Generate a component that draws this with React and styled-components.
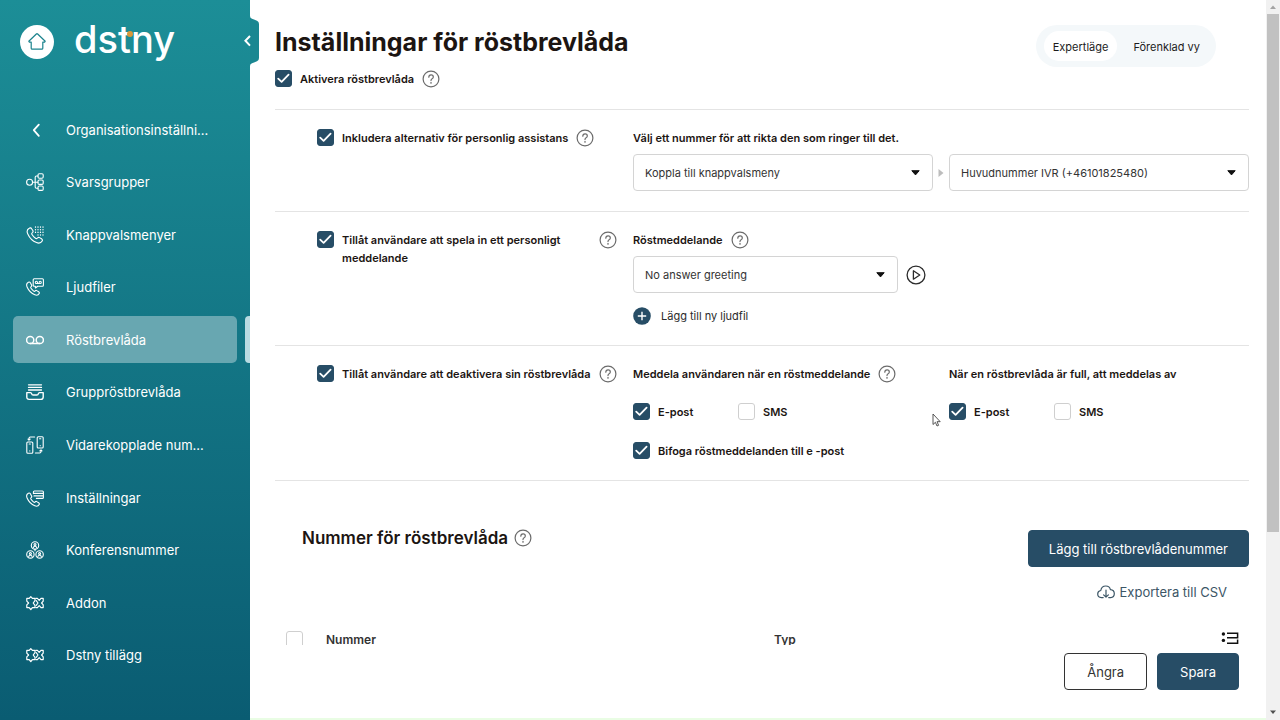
import React, { useState } from "react";
import styled, { createGlobalStyle } from "styled-components";

const GlobalStyle = createGlobalStyle`
  * {
    box-sizing: border-box;
  }
  body {
    margin: 0;
    font-family: Inter, "Liberation Sans", sans-serif;
    color: #1c1512;
    background: #fff;
  }
  button, select, input {
    font-family: inherit;
    margin: 0;
  }
`;

// Page shell
const Shell = styled.div`
  display: flex;
  height: 100vh;
  overflow: hidden;
`;

const Sidebar = styled.aside`
  position: relative;
  display: flex;
  flex-direction: column;
  flex: 0 0 250px;
  padding-bottom: 41px;
  background: linear-gradient(#1c8e97, #0a5c72);
`;

const Brand = styled.div`
  display: flex;
  align-items: center;
  gap: 20px;
  height: 106px;
  padding: 0 20px 22px;
`;

const HomeLink = styled.a`
  display: grid;
  place-items: center;
  width: 34px;
  height: 34px;
  border-radius: 50%;
  background: #fff;
  color: #1b838d;
`;

const Logo = styled.span`
  position: relative;
  margin-bottom: 6px;
  font-size: 38px;
  font-weight: 500;
  line-height: 38px;
  color: #fff;
`;

const LogoDot = styled.i`
  position: absolute;
  top: 11px;
  left: 53px;
  width: 6px;
  height: 6px;
  border-radius: 50%;
  background: #d9983a;
`;

const CollapseButton = styled.button`
  position: absolute;
  top: 16px;
  right: -9px;
  width: 16px;
  height: 50px;
  padding: 0;
  border: 0;
  background: none;
  cursor: pointer;
`;

const Nav = styled.nav`
  display: flex;
  flex: 1;
`;

const NavList = styled.ul`
  display: flex;
  flex: 1;
  flex-direction: column;
  justify-content: space-between;
  margin: 0;
  padding: 0;
  list-style: none;
`;

const NavItem = styled.li`
  display: flex;
  gap: 8px;
  padding-left: 13px;
`;

const NavLink = styled.a`
  display: flex;
  flex: 1;
  align-items: center;
  gap: 22px;
  height: 47px;
  padding-left: 13px;
  border-radius: 5px;
  font-size: 13px;
  line-height: 18px;
  color: #fff;
  text-decoration: none;
  background: ${({ $active }) => ($active ? "#68a7b1" : "transparent")};
  svg {
    flex: none;
  }
`;

const NavMarker = styled.span`
  width: 5px;
  border-radius: 4px 0 0 4px;
  background: ${({ $active }) => ($active ? "#b9dbe2" : "transparent")};
`;

const Main = styled.main`
  display: flex;
  flex: 1;
  flex-direction: column;
  min-width: 0;
  border-bottom: 2px solid #e9fde4;
`;

const Content = styled.div`
  flex: 1;
  min-height: 0;
  padding: 25px 17px 0 25px;
  overflow: hidden;
`;

const PageHeader = styled.header`
  display: flex;
  justify-content: space-between;
  padding-right: 33px;
`;

const PageTitle = styled.h1`
  margin: 0;
  font-size: 25px;
  font-weight: 700;
  line-height: 34px;
`;

const ModeSwitch = styled.div`
  display: flex;
  height: 42px;
  padding: 6px 0 6px 8px;
  border-radius: 21px;
  background: #f4f8fa;
`;

const ModeButton = styled.button`
  height: 30px;
  padding: 1px ${({ $active }) => ($active ? "9px" : "16px")} 0;
  border: 0;
  border-radius: 15px;
  font-size: 11px;
  color: #1c1c1c;
  background: ${({ $active }) => ($active ? "#fff" : "transparent")};
  cursor: pointer;
`;

// Settings form
const FieldHead = styled.div`
  display: flex;
  align-items: flex-start;
  justify-content: ${({ $spread }) => ($spread ? "space-between" : "flex-start")};
  gap: 8px;
  min-height: 18px;
`;

const ActivateRow = styled(FieldHead)`
  padding: 3px 0 21px;
  border-bottom: 1px solid #e4e4e4;
`;

const SettingsRow = styled.section`
  display: grid;
  grid-template-columns: repeat(3, minmax(0, 1fr));
  gap: 16px;
  padding: 19px 0 20px 42px;
  border-bottom: 1px solid #e4e4e4;
`;

const WideCell = styled.div`
  grid-column: span 2;
`;

const CheckLabel = styled.label`
  display: flex;
  align-items: flex-start;
  gap: 8px;
  font-size: 11px;
  font-weight: 600;
  line-height: 18px;
  cursor: pointer;
`;

const CheckBox = styled.span`
  display: inline-grid;
  flex: none;
  width: 17px;
  height: 17px;
  > * {
    grid-area: 1 / 1;
  }
  svg {
    pointer-events: none;
  }
`;

const CheckInput = styled.input`
  width: 17px;
  height: 17px;
  border: 1px solid #cfcfcf;
  border-radius: 3px;
  background: #fff;
  appearance: none;
  cursor: pointer;
  &:checked {
    border-color: #274d66;
    background: #274d66;
  }
`;

const FieldLabel = styled.label`
  font-size: 11px;
  font-weight: 600;
  line-height: 18px;
`;

const FieldTitle = styled.span`
  font-size: 11px;
  font-weight: 600;
  line-height: 18px;
`;

const HelpButton = styled.button`
  display: flex;
  flex: none;
  padding: 0;
  border: 0;
  background: none;
  color: #6b6b6b;
  cursor: pointer;
`;

const SelectRow = styled.div`
  display: flex;
  align-items: center;
  gap: ${({ $gap }) => $gap || "0"};
  margin-top: 7px;
  > svg {
    flex: 0 0 16px;
  }
`;

const SelectBox = styled.div`
  display: grid;
  flex: ${({ $width }) => ($width ? `0 0 ${$width}` : "1")};
  align-items: center;
  > * {
    grid-area: 1 / 1;
  }
  svg {
    justify-self: end;
    margin-right: 13px;
    pointer-events: none;
  }
`;

const SelectInput = styled.select`
  width: 100%;
  height: 37px;
  padding: 0 32px 0 11px;
  border: 1px solid #d4d4d4;
  border-radius: 4px;
  font-size: 11px;
  color: #333;
  background: #fff;
  appearance: none;
`;

const IconButton = styled.button`
  display: flex;
  padding: 0;
  border: 0;
  background: none;
  color: #2b2b2b;
  cursor: pointer;
`;

const AddFileButton = styled(IconButton)`
  align-items: center;
  gap: 10px;
  height: 18px;
  margin-top: 14px;
  font-size: 11px;
`;

const CheckGrid = styled.div`
  display: grid;
  grid-template-columns: 105px 1fr;
  row-gap: 21px;
  margin-top: 20px;
`;

const WideCheck = styled.div`
  grid-column: span 2;
`;

// Voicemail numbers
const NumbersHeader = styled.div`
  display: flex;
  justify-content: space-between;
  margin-top: 49px;
  padding-left: 27px;
`;

const NumbersTitle = styled.h2`
  display: flex;
  align-items: center;
  gap: 6px;
  height: 16px;
  margin: 0;
  font-size: 17px;
  font-weight: 600;
`;

const Actions = styled.div`
  display: flex;
  flex-direction: column;
  align-items: flex-end;
`;

const Button = styled.button`
  height: 37px;
  padding: 0 ${({ $wide }) => ($wide ? "20px" : "22px")};
  border: 1px solid ${({ $outline }) => ($outline ? "#333" : "#274d66")};
  border-radius: 4px;
  font-size: 13px;
  color: ${({ $outline }) => ($outline ? "#333" : "#fff")};
  background: ${({ $outline }) => ($outline ? "#fff" : "#274d66")};
  cursor: pointer;
`;

const ExportLink = styled.a`
  display: flex;
  align-items: center;
  gap: 5px;
  margin: 16px 22px 0 0;
  font-size: 13px;
  line-height: 18px;
  color: #3c5666;
  text-decoration: none;
`;

const Table = styled.table`
  width: 100%;
  margin-top: 26px;
  border-collapse: collapse;
  table-layout: fixed;
  th {
    height: 24px;
    padding: 0;
    font-size: 12px;
    font-weight: 600;
    line-height: 18px;
    text-align: left;
    vertical-align: middle;
    color: #333;
  }
  th:first-child {
    width: 51px;
    padding: 4px 0 0 11px;
  }
  th:nth-child(2) {
    width: 46%;
  }
  th:last-child {
    width: 48px;
    padding: 4px 0 0 20px;
    vertical-align: top;
  }
`;

const Footer = styled.footer`
  display: flex;
  justify-content: flex-end;
  gap: 10px;
  padding: 8px 27px 28px;
`;

const ScrollTrack = styled.div`
  display: flex;
  flex: 0 0 14px;
  flex-direction: column;
  align-items: center;
  background: #f1f1f1;
  svg {
    flex: none;
  }
`;

const ScrollRoom = styled.div`
  flex: 1;
  width: 12px;
`;

const ScrollThumb = styled.div`
  height: 75%;
  background: #c1c1c1;
`;

const Pointer = styled.svg`
  position: absolute;
  top: 413px;
  left: 932px;
  pointer-events: none;
`;

// Icons
const NavSvg = ({ children }) => (
  <svg
    width="18"
    height="18"
    viewBox="0 0 18 18"
    fill="none"
    stroke="currentColor"
    strokeWidth="1.1"
    strokeLinecap="round"
    strokeLinejoin="round"
    aria-hidden="true"
  >
    {children}
  </svg>
);

const HANDSET =
  "M3.2 2.2C1 3.5.6 5.5 1.8 8c1.8 4 4.7 7 8.7 8.6 2.5 1 4.5.4 5.7-1.6.6-1 .1-1.6-.7-2.2l-1.9-1.2c-.8-.5-1.5-.3-2.1.4-.7.8-1.2.9-2 .3C8 11.2 6.9 10 6 8.5c-.5-.8-.4-1.3.4-1.9.7-.6.9-1.3.4-2.1L5.6 2.7c-.6-.9-1.5-1.1-2.4-.5Z";

const SMALL_HANDSET =
  "M2.4 4.2C.4 5.2.2 7 1.2 9.2c1.6 3.6 4.2 6.2 7.6 7.6 2 .8 3.6.2 4.4-1.4.4-.8 0-1.3-.6-1.7l-1.8-1.1c-.6-.4-1.2-.2-1.6.3-.5.6-.9.6-1.5.2-1.2-.9-2.1-1.9-2.8-3.1-.3-.6-.2-1 .3-1.4.6-.5.7-1.1.3-1.7L4.4 4.8c-.5-.8-1.2-1-2-.6Z";

const BackIcon = () => (
  <NavSvg>
    <path d="M12.8 3.6 7.8 9.2l5 5.6" strokeWidth="1.8" />
  </NavSvg>
);

const GroupsIcon = () => (
  <NavSvg>
    <circle cx="3.6" cy="9.2" r="3" />
    <rect x="12" y=".8" width="5.2" height="4.4" rx="1.2" />
    <rect x="12" y="7" width="5.2" height="4.4" rx="1.2" />
    <rect x="12" y="13" width="5.2" height="4.4" rx="1.2" />
    <path d="M6.6 9.2H12M12 3h-1.6q-1.2 0-1.2 1.2v9.8q0 1.2 1.2 1.2H12" />
  </NavSvg>
);

const KeypadIcon = () => (
  <NavSvg>
    <path d={HANDSET} />
    <path
      d="M9.5 1v.2M12 1v.2M14.5 1v.2M17 1v.2M9.5 3.6v.2M12 3.6v.2M14.5 3.6v.2M17 3.6v.2M9.5 6.2v.2M12 6.2v.2M14.5 6.2v.2M17 6.2v.2M12 8.8v.2M14.5 8.8v.2M17 8.8v.2"
      strokeWidth="1.3"
    />
  </NavSvg>
);

const AudioIcon = () => (
  <NavSvg>
    <path d={SMALL_HANDSET} />
    <path d="M8.2.8h8.2q1 0 1 1v5.4q0 1-1 1h-4.6L9.4 10V8.2H8.2q-1 0-1-1V1.8q0-1 1-1Z" />
    <circle cx="10.4" cy="4.4" r="1.1" />
    <circle cx="14.2" cy="4.4" r="1.1" />
    <path d="M10.4 5.5h3.8" />
  </NavSvg>
);

const VoicemailIcon = () => (
  <NavSvg>
    <circle cx="4.2" cy="9" r="3.6" strokeWidth="1.5" />
    <circle cx="13.8" cy="9" r="3.6" strokeWidth="1.5" />
    <path d="M4.2 12.6h9.6" strokeWidth="1.5" />
  </NavSvg>
);

const InboxIcon = () => (
  <NavSvg>
    <path d="M2.5 1.8h13M2.5 4.4h13M2.5 7h13" strokeWidth="1.3" />
    <path
      d="M.8 9.6h3.6q1 0 1.2 1 .3 1.4 1.6 1.4h3.6q1.3 0 1.6-1.4.2-1 1.2-1h3.6v4.4q0 2.4-2.4 2.4H3.2Q.8 16.4.8 14Z"
      strokeWidth="1.4"
    />
  </NavSvg>
);

const ForwardIcon = () => (
  <NavSvg>
    <rect x=".8" y="6" width="6" height="11.2" rx="1" />
    <rect x="11.2" y=".8" width="6" height="11.2" rx="1" />
    <path d="M3 4V2.4Q3 1 4.4 1h4.2M2 3.2l1 1 1.2-1M15 14v1.6q0 1.4-1.4 1.4H9.4M13.8 14.8l1.2-1 1 1M3.2 8h1.2M13.6 2.8h1.2M3.8 14.8v.1M14.2 9.6v.1" />
  </NavSvg>
);

const CallSettingsIcon = () => (
  <NavSvg>
    <path d={SMALL_HANDSET} />
    <path d="M7.4 4.6V3q0-1 1-1h8q1 0 1 1v5.4q0 1-1 1h-6M7.4 4.4h10M8 6.9h9.4" />
  </NavSvg>
);

const ConferenceIcon = () => (
  <NavSvg>
    {[
      [9, 4.4],
      [4.4, 13.4],
      [13.6, 13.4],
    ].map(([x, y]) => (
      <g key={x}>
        <circle cx={x} cy={y} r="3.7" />
        <circle cx={x} cy={y - 0.9} r="1" />
        <path d={`M${x - 1.7} ${y + 2.2}q.2-1.4 1.7-1.4t1.7 1.4`} />
      </g>
    ))}
    <path d="M9 8.2v1.6" />
  </NavSvg>
);

const PuzzleIcon = () => (
  <NavSvg>
    <path
      d="M.8 4.4h2.4l1.6-1.8 1.6 1.8H9v2.2L7.2 9 9 11.4v2.2H6.4l-1.6 2-1.6-2H.8v-2.8L2.6 9 .8 7.2Z"
      strokeWidth="1.2"
    />
    <path
      d="M9.8 4.4h1.6l1.8 2 1.8-2h2.2v2.8L15.6 9l1.6 1.8v2.8H15l-1.8-2-1.8 2H9.8M10.2 6.6 12 9l-1.8 2.4"
      strokeWidth="1.2"
    />
  </NavSvg>
);

const HelpIcon = () => (
  <svg width="18" height="18" viewBox="0 0 18 18" fill="none" stroke="currentColor" aria-hidden="true">
    <circle cx="9" cy="9" r="7.9" strokeWidth="1.2" />
    <path
      d="M6.8 7.2q0-2.3 2.3-2.3 2.2 0 2.2 2 0 1.2-1.2 1.8Q9 9.3 9 10.6"
      strokeWidth="1.2"
      strokeLinecap="round"
    />
    <circle cx="9" cy="12.9" r=".8" fill="currentColor" stroke="none" />
  </svg>
);

const CaretIcon = () => (
  <svg width="9" height="6" viewBox="0 0 9 6" aria-hidden="true">
    <path d="M.8.7h7.4L4.5 4.9Z" fill="#111" stroke="#111" strokeLinejoin="round" />
  </svg>
);

// Reusable parts
const Help = ({ topic }) => (
  <HelpButton type="button" aria-label={`Hjälp: ${topic}`}>
    <HelpIcon />
  </HelpButton>
);

function Tick({ checked = false, ...rest }) {
  const [on, setOn] = useState(checked);
  return (
    <CheckBox>
      <CheckInput type="checkbox" checked={on} onChange={() => setOn(!on)} {...rest} />
      {on && (
        <svg width="17" height="17" viewBox="0 0 17 17" aria-hidden="true">
          <path
            d="m3.2 8.6 3.4 3.2 7-7.2"
            fill="none"
            stroke="#fff"
            strokeWidth="1.8"
            strokeLinecap="round"
            strokeLinejoin="round"
          />
        </svg>
      )}
    </CheckBox>
  );
}

const Check = ({ children, checked }) => (
  <CheckLabel>
    <Tick checked={checked} />
    <span>{children}</span>
  </CheckLabel>
);

const Select = ({ option, width, ...rest }) => (
  <SelectBox $width={width}>
    <SelectInput {...rest}>
      <option>{option}</option>
    </SelectInput>
    <CaretIcon />
  </SelectBox>
);

const navItems = [
  { label: "Organisationsinställni...", icon: <BackIcon /> },
  { label: "Svarsgrupper", icon: <GroupsIcon /> },
  { label: "Knappvalsmenyer", icon: <KeypadIcon /> },
  { label: "Ljudfiler", icon: <AudioIcon /> },
  { label: "Röstbrevlåda", icon: <VoicemailIcon />, active: true },
  { label: "Gruppröstbrevlåda", icon: <InboxIcon /> },
  { label: "Vidarekopplade num...", icon: <ForwardIcon /> },
  { label: "Inställningar", icon: <CallSettingsIcon /> },
  { label: "Konferensnummer", icon: <ConferenceIcon /> },
  { label: "Addon", icon: <PuzzleIcon /> },
  { label: "Dstny tillägg", icon: <PuzzleIcon /> },
];

const SideMenu = () => (
  <Sidebar>
    <Brand>
      <HomeLink href="#home" aria-label="Hem">
        <svg width="20" height="20" viewBox="0 0 20 20" fill="none" aria-hidden="true">
          <path
            d="M9.6 1.8q.4-.4.8 0l7.8 7.4-.6 1h-1.8v6q0 1-1 1H5.2q-1 0-1-1v-6H2.4l-.6-1Z"
            stroke="currentColor"
            strokeWidth="1.2"
            strokeLinejoin="round"
          />
        </svg>
      </HomeLink>
      <Logo>
        dstny
        <LogoDot />
      </Logo>
    </Brand>
    <CollapseButton type="button" aria-label="Dölj menyn">
      <svg width="16" height="50" viewBox="0 0 16 50" fill="none" aria-hidden="true">
        <path d="M7 0q0 2 2 2.7l5 2Q16 5.5 16 8v34q0 2.5-2 3.3l-5 2Q7 48 7 50Z" fill="#1a8791" />
        <path d="m7 20-4.6 4.8L7 29.6" stroke="#fff" strokeWidth="2" />
      </svg>
    </CollapseButton>
    <Nav aria-label="Meny">
      <NavList>
        {navItems.map(({ label, icon, active }) => (
          <NavItem key={label}>
            <NavLink href="#" $active={active} aria-current={active ? "page" : undefined}>
              {icon}
              {label}
            </NavLink>
            <NavMarker $active={active} />
          </NavItem>
        ))}
      </NavList>
    </Nav>
  </Sidebar>
);

export default function App() {
  const [mode, setMode] = useState("Expertläge");

  return (
    <>
      <GlobalStyle />
      <Shell>
        <SideMenu />
        <Main>
          <Content>
            <PageHeader>
              <PageTitle>Inställningar för röstbrevlåda</PageTitle>
              <ModeSwitch>
                {["Expertläge", "Förenklad vy"].map((name) => (
                  <ModeButton
                    key={name}
                    type="button"
                    $active={mode === name}
                    aria-pressed={mode === name}
                    onClick={() => setMode(name)}
                  >
                    {name}
                  </ModeButton>
                ))}
              </ModeSwitch>
            </PageHeader>

            <ActivateRow>
              <Check checked>Aktivera röstbrevlåda</Check>
              <Help topic="Aktivera röstbrevlåda" />
            </ActivateRow>

            <SettingsRow>
              <FieldHead>
                <Check checked>Inkludera alternativ för personlig assistans</Check>
                <Help topic="Personlig assistans" />
              </FieldHead>
              <WideCell>
                <FieldHead>
                  <FieldLabel htmlFor="assist-type">
                    Välj ett nummer för att rikta den som ringer till det.
                  </FieldLabel>
                </FieldHead>
                <SelectRow>
                  <Select id="assist-type" option="Koppla till knappvalsmeny" />
                  <svg width="16" height="10" viewBox="0 0 16 10" aria-hidden="true">
                    <path d="M5.5 1v8l5-4Z" fill="#bdbdbd" />
                  </svg>
                  <Select aria-label="Nummer" option="Huvudnummer IVR (+46101825480)" />
                </SelectRow>
              </WideCell>
            </SettingsRow>

            <SettingsRow>
              <FieldHead $spread>
                <Check checked>Tillåt användare att spela in ett personligt meddelande</Check>
                <Help topic="Personligt meddelande" />
              </FieldHead>
              <div>
                <FieldHead>
                  <FieldLabel htmlFor="greeting">Röstmeddelande</FieldLabel>
                  <Help topic="Röstmeddelande" />
                </FieldHead>
                <SelectRow $gap="8px">
                  <Select id="greeting" option="No answer greeting" width="265px" />
                  <IconButton type="button" aria-label="Spela upp">
                    <svg width="20" height="20" viewBox="0 0 20 20" fill="none" stroke="currentColor" aria-hidden="true">
                      <circle cx="10" cy="10" r="8.9" strokeWidth="1.3" />
                      <path d="M7.4 5.8v8.4l6.4-4.2Z" strokeWidth="1.3" strokeLinejoin="round" />
                    </svg>
                  </IconButton>
                </SelectRow>
                <AddFileButton type="button">
                  <svg width="18" height="18" viewBox="0 0 18 18" aria-hidden="true">
                    <circle cx="9" cy="9" r="8.8" fill="#274d66" />
                    <path d="M9 4.8v8.4M4.8 9h8.4" stroke="#fff" strokeWidth="1.4" />
                  </svg>
                  Lägg till ny ljudfil
                </AddFileButton>
              </div>
            </SettingsRow>

            <SettingsRow>
              <FieldHead>
                <Check checked>Tillåt användare att deaktivera sin röstbrevlåda</Check>
                <Help topic="Deaktivera röstbrevlåda" />
              </FieldHead>
              <div>
                <FieldHead>
                  <FieldTitle>Meddela användaren när en röstmeddelande</FieldTitle>
                  <Help topic="Meddela användaren" />
                </FieldHead>
                <CheckGrid>
                  <Check checked>E-post</Check>
                  <Check>SMS</Check>
                  <WideCheck>
                    <Check checked>Bifoga röstmeddelanden till e -post</Check>
                  </WideCheck>
                </CheckGrid>
              </div>
              <div>
                <FieldHead>
                  <FieldTitle>När en röstbrevlåda är full, att meddelas av</FieldTitle>
                </FieldHead>
                <CheckGrid>
                  <Check checked>E-post</Check>
                  <Check>SMS</Check>
                </CheckGrid>
              </div>
            </SettingsRow>

            <NumbersHeader>
              <NumbersTitle>
                Nummer för röstbrevlåda
                <Help topic="Nummer för röstbrevlåda" />
              </NumbersTitle>
              <Actions>
                <Button type="button" $wide>
                  Lägg till röstbrevlådenummer
                </Button>
                <ExportLink href="#csv">
                  <svg
                    width="18"
                    height="14"
                    viewBox="0 0 18 14"
                    fill="none"
                    stroke="currentColor"
                    strokeWidth="1.2"
                    strokeLinecap="round"
                    strokeLinejoin="round"
                    aria-hidden="true"
                  >
                    <path d="M6.2 12.6H4.4Q.7 12.4.7 9q0-3 3.1-3.5Q4.5 1 8.8 1q3.8 0 4.6 3.7 3.9.3 3.9 4 0 3.6-3.6 3.9h-2M9 5v7M6.6 9.8 9 12.2l2.4-2.4" />
                  </svg>
                  Exportera till CSV
                </ExportLink>
              </Actions>
            </NumbersHeader>

            <Table>
              <thead>
                <tr>
                  <th scope="col">
                    <Tick aria-label="Välj alla" />
                  </th>
                  <th scope="col">Nummer</th>
                  <th scope="col">Typ</th>
                  <th scope="col">
                    <IconButton type="button" aria-label="Kolumner">
                      <svg width="18" height="14" viewBox="0 0 18 14" fill="none" stroke="#111" aria-hidden="true">
                        <circle cx="2.4" cy="3" r="1.7" fill="#111" stroke="none" />
                        <circle cx="2.4" cy="9.4" r="1.7" fill="#111" stroke="none" />
                        <path d="M6 2.2h10.6v4.6H6M16.6 8.4v3.8H6" strokeWidth="1.5" />
                      </svg>
                    </IconButton>
                  </th>
                </tr>
              </thead>
            </Table>
          </Content>
          <Footer>
            <Button type="button" $outline>
              Ångra
            </Button>
            <Button type="button">Spara</Button>
          </Footer>
        </Main>
        <ScrollTrack aria-hidden="true">
          <svg width="14" height="14" viewBox="0 0 14 14">
            <path d="M4 9h6L7 5.5Z" fill="#a3a3a3" />
          </svg>
          <ScrollRoom>
            <ScrollThumb />
          </ScrollRoom>
          <svg width="14" height="16" viewBox="0 0 14 16">
            <path d="M4 6.5h6L7 10Z" fill="#505050" />
          </svg>
        </ScrollTrack>
      </Shell>
      <Pointer width="9" height="14" viewBox="0 0 9 14" aria-hidden="true">
        <path d="M1 1v10.5l2.4-2.2L5 13l1.6-.7L5 8.7h3.2Z" fill="#fff" stroke="#444" strokeWidth=".9" />
      </Pointer>
    </>
  );
}
